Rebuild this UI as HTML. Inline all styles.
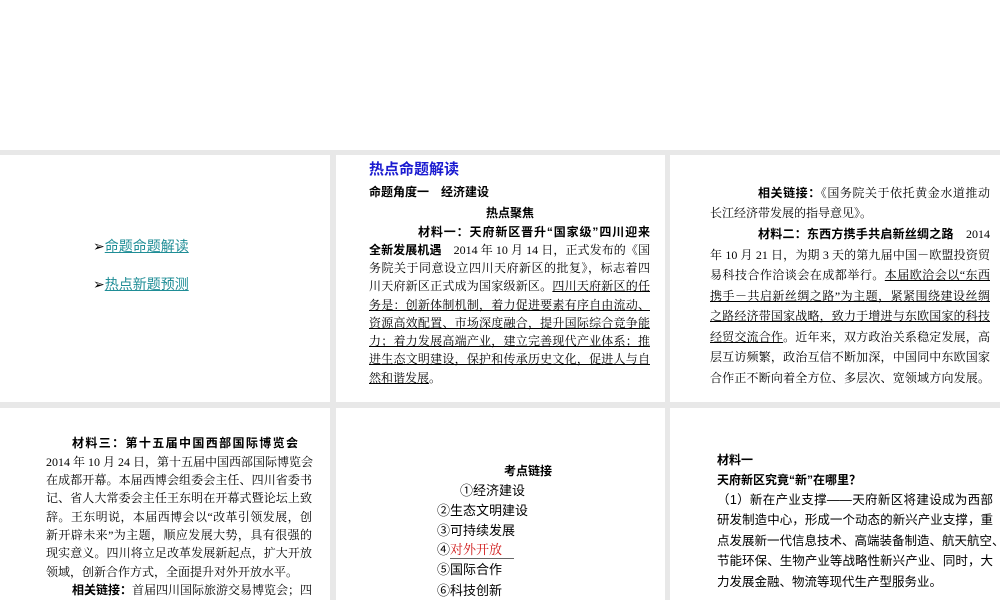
<!DOCTYPE html>
<html><head><meta charset="utf-8"><style>
body{margin:0;width:1000px;height:600px;background:#fff;position:relative;overflow:hidden;font-family:"Liberation Sans","Noto Sans CJK SC",sans-serif;color:#000}
.bg{position:absolute;left:0;top:150px;width:1000px;height:450px;background:#e8e8e8}
.p{position:absolute;background:#fff}
.l{position:absolute;white-space:nowrap;font-size:12px;line-height:16px;font-family:"Liberation Serif","Noto Serif CJK SC",serif}
.j{text-align:justify;text-align-last:justify}
.b{font-weight:bold;font-family:"Liberation Sans","Noto Sans CJK SC",sans-serif}
.u{text-decoration:underline}
.s{font-family:"Liberation Sans","Noto Sans CJK SC",sans-serif;font-size:13px}
a{color:#1f8d96;text-decoration:underline}
</style></head><body>
<div class="bg"></div>
<div class="p" style="left:0;top:155px;width:330px;height:247px"></div>
<div class="p" style="left:336px;top:155px;width:329px;height:247px"></div>
<div class="p" style="left:670px;top:155px;width:330px;height:247px"></div>
<div class="p" style="left:0;top:408px;width:330px;height:192px"></div>
<div class="p" style="left:336px;top:408px;width:329px;height:192px"></div>
<div class="p" style="left:670px;top:408px;width:330px;height:192px"></div>

<div class="l s" style="left:93px;top:238px;font-size:14px">➢<a>命题命题解读</a></div>
<div class="l s" style="left:93px;top:276px;font-size:14px">➢<a>热点新题预测</a></div>

<div class="l b" style="left:369px;top:161px;font-size:15px;line-height:18px;color:#1a1ad0">热点命题解读</div>
<div class="l b" style="left:369px;top:184px">命题角度一　经济建设</div>
<div class="l b" style="left:486px;top:205px">热点聚焦</div>
<div class="l j b" style="left:418px;top:224px;width:232px">材料一：天府新区晋升“国家级”四川迎来</div>
<div class="l j" style="left:369px;top:242px;width:281px"><b class="b">全新发展机遇</b>　2014 年 10 月 14 日，正式发布的《国</div>
<div class="l j" style="left:369px;top:260px;width:281px">务院关于同意设立四川天府新区的批复》，标志着四</div>
<div class="l j" style="left:369px;top:278px;width:281px">川天府新区正式成为国家级新区。<span class="u">四川天府新区的任</span></div>
<div class="l j u" style="left:369px;top:297px;width:281px">务是：创新体制机制，着力促进要素有序自由流动、</div>
<div class="l j u" style="left:369px;top:315px;width:281px">资源高效配置、市场深度融合，提升国际综合竞争能</div>
<div class="l j u" style="left:369px;top:333px;width:281px">力；着力发展高端产业，建立完善现代产业体系；推</div>
<div class="l j u" style="left:369px;top:351px;width:281px">进生态文明建设，保护和传承历史文化，促进人与自</div>
<div class="l" style="left:369px;top:370px"><span class="u">然和谐发展</span>。</div>

<div class="l j" style="left:758px;top:185px;width:232px"><b class="b">相关链接：</b>《国务院关于依托黄金水道推动</div>
<div class="l" style="left:710px;top:205px">长江经济带发展的指导意见》。</div>
<div class="l j" style="left:758px;top:226px;width:232px"><b class="b">材料二：东西方携手共启新丝绸之路</b>　2014</div>
<div class="l j" style="left:710px;top:247px;width:280px">年 10 月 21 日，为期 3 天的第九届中国－欧盟投资贸</div>
<div class="l j" style="left:710px;top:267px;width:280px">易科技合作洽谈会在成都举行。<span class="u">本届欧洽会以“东西</span></div>
<div class="l j u" style="left:710px;top:288px;width:280px">携手－共启新丝绸之路”为主题，紧紧围绕建设丝绸</div>
<div class="l j u" style="left:710px;top:308px;width:280px">之路经济带国家战略，致力于增进与东欧国家的科技</div>
<div class="l j" style="left:710px;top:329px;width:280px"><span class="u">经贸交流合作</span>。近年来，双方政治关系稳定发展，高</div>
<div class="l j" style="left:710px;top:349px;width:280px">层互访频繁，政治互信不断加深，中国同中东欧国家</div>
<div class="l j" style="left:710px;top:370px;width:280px">合作正不断向着全方位、多层次、宽领域方向发展。</div>

<div class="l j b" style="left:72px;top:435px;width:226px">材料三：第十五届中国西部国际博览会</div>
<div class="l j" style="left:46px;top:454px;width:266px">2014 年 10 月 24 日，第十五届中国西部国际博览会</div>
<div class="l j" style="left:46px;top:472px;width:266px">在成都开幕。本届西博会组委会主任、四川省委书</div>
<div class="l j" style="left:46px;top:490px;width:266px">记、省人大常委会主任王东明在开幕式暨论坛上致</div>
<div class="l j" style="left:46px;top:509px;width:266px">辞。王东明说，本届西博会以“改革引领发展，创</div>
<div class="l j" style="left:46px;top:527px;width:266px">新开辟未来”为主题，顺应发展大势，具有很强的</div>
<div class="l j" style="left:46px;top:545px;width:266px">现实意义。四川将立足改革发展新起点，扩大开放</div>
<div class="l" style="left:46px;top:564px">领域，创新合作方式，全面提升对外开放水平。</div>
<div class="l j" style="left:72px;top:582px;width:240px"><b class="b">相关链接：</b>首届四川国际旅游交易博览会；四</div>

<div class="l b" style="left:504px;top:463px">考点链接</div>
<div class="l s" style="left:460px;top:483px">①经济建设</div>
<div class="l s" style="left:437px;top:503px">②生态文明建设</div>
<div class="l s" style="left:437px;top:523px">③可持续发展</div>
<div class="l s" style="left:437px;top:542px">④<span style="color:#d01818;font-family:'Liberation Serif','Noto Serif CJK SC',serif;display:inline-block;width:64px;border-bottom:1px solid #666">对外开放</span></div>
<div class="l s" style="left:437px;top:562px">⑤国际合作</div>
<div class="l s" style="left:437px;top:583px">⑥科技创新</div>

<div class="l b" style="left:717px;top:452px">材料一</div>
<div class="l b" style="left:717px;top:472px">天府新区究竟“新”在哪里？</div>
<div class="l s j" style="left:717px;top:492px;width:276px;font-size:12.5px">（1）新在产业支撑——天府新区将建设成为西部</div>
<div class="l s j" style="left:717px;top:512px;width:276px;font-size:12.5px">研发制造中心，形成一个动态的新兴产业支撑，重</div>
<div class="l s j" style="left:717px;top:533px;width:280px;font-size:12.5px">点发展新一代信息技术、高端装备制造、航天航空、</div>
<div class="l s j" style="left:717px;top:553px;width:276px;font-size:12.5px">节能环保、生物产业等战略性新兴产业、同时，大</div>
<div class="l s" style="left:717px;top:574px;font-size:12.5px">力发展金融、物流等现代生产型服务业。</div>
</body></html>
